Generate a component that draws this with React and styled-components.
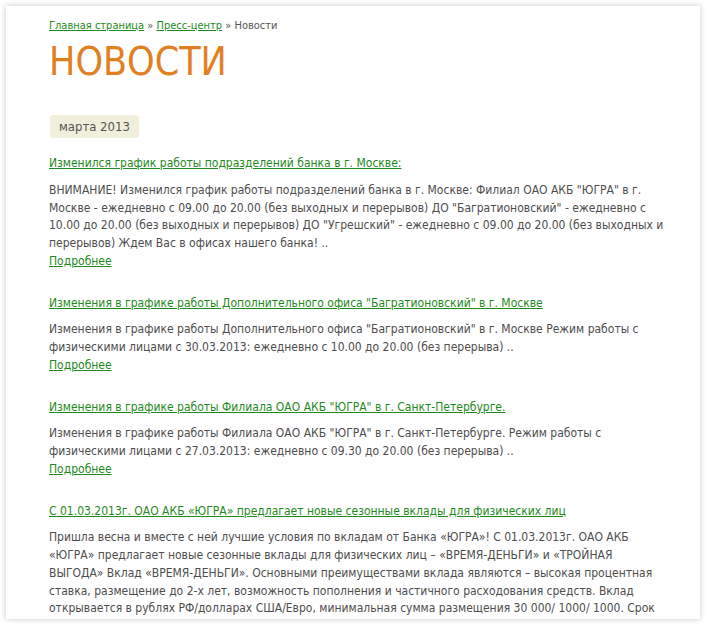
import React from 'react'
import styled, { createGlobalStyle } from 'styled-components'

const news = [
  {
    title: 'Изменился график работы подразделений банка в г. Москве:',
    text: 'ВНИМАНИЕ! Изменился график работы подразделений банка в г. Москве: Филиал ОАО АКБ "ЮГРА" в г. Москве - ежедневно с 09.00 до 20.00 (без выходных и перерывов) ДО "Багратионовский" - ежедневно с 10.00 до 20.00 (без выходных и перерывов) ДО "Угрешский" - ежедневно с 09.00 до 20.00 (без выходных и перерывов) Ждем Вас в офисах нашего банка! ..',
  },
  {
    title: 'Изменения в графике работы Дополнительного офиса "Багратионовский" в г. Москве',
    text: 'Изменения в графике работы Дополнительного офиса "Багратионовский" в г. Москве Режим работы с физическими лицами с 30.03.2013: ежедневно с 10.00 до 20.00 (без перерыва) ..',
  },
  {
    title: 'Изменения в графике работы Филиала ОАО АКБ "ЮГРА" в г. Санкт-Петербурге.',
    text: 'Изменения в графике работы Филиала ОАО АКБ "ЮГРА" в г. Санкт-Петербурге. Режим работы с физическими лицами с 27.03.2013: ежедневно с 09.30 до 20.00 (без перерыва) ..',
  },
  {
    title: 'С 01.03.2013г. ОАО АКБ «ЮГРА» предлагает новые сезонные вклады для физических лиц',
    text: 'Пришла весна и вместе с ней лучшие условия по вкладам от Банка «ЮГРА»! С 01.03.2013г. ОАО АКБ «ЮГРА» предлагает новые сезонные вклады для физических лиц – «ВРЕМЯ-ДЕНЬГИ» и «ТРОЙНАЯ ВЫГОДА» Вклад «ВРЕМЯ-ДЕНЬГИ». Основными преимуществами вклада являются – высокая процентная ставка, размещение до 2-х лет, возможность пополнения и частичного расходования средств. Вклад открывается в рублях РФ/долларах США/Евро, минимальная сумма размещения 30 000/ 1000/ 1000. Срок вклада – 91 день, 181 день, 367 дней, 546 дней и 731 день.',
  },
]

const GlobalStyle = createGlobalStyle`
  html, body {
    margin: 0;
    padding: 0;
    background: #ffffff;
  }
  body {
    font-family: 'DejaVu Sans Condensed', 'DejaVu Sans', sans-serif;
  }
`

const Page = styled.div`
  padding: 6px;
  height: 613px;
`

const Panel = styled.div`
  width: 694px;
  height: 613px;
  box-sizing: border-box;
  background: #ffffff;
  box-shadow: 0 0 6px rgba(0, 0, 0, 0.22);
  padding: 13px 31px 0 43px;
  overflow: hidden;
`

const Crumbs = styled.div`
  font-size: 11px;
  line-height: 14px;
  color: #555555;

  a {
    color: #1f8a22;
    text-decoration: underline;
  }
`

const Title = styled.h1`
  margin: 7px 0 0;
  font-family: 'DejaVu Sans Condensed', 'DejaVu Sans', sans-serif;
  font-weight: normal;
  font-size: 39px;
  line-height: 44px;
  color: #e2801f;
`

const DateBadge = styled.div`
  display: inline-block;
  margin: 31px 0 0 1px;
  padding: 0 9px;
  height: 23px;
  line-height: 23px;
  font-size: 13px;
  color: #555555;
  background: #f0efdc;
  border-radius: 3px;
`

const List = styled.div`
  margin-top: 17px;
  display: flex;
  flex-direction: column;
  gap: 24px;
`

const Item = styled.div`
  font-size: 12px;
  line-height: 17.75px;
`

const ItemLink = styled.a`
  color: #1f8a22;
  text-decoration: underline;
`

const ItemText = styled.p`
  margin: 9px 0 0;
  color: #4d4d4d;
`

const News = ({ title, text }) => (
  <Item>
    <ItemLink href="#">{title}</ItemLink>
    <ItemText>{text}</ItemText>
    <ItemLink href="#">Подробнее</ItemLink>
  </Item>
)

export default function App() {
  return (
    <>
      <GlobalStyle />
      <Page>
        <Panel>
          <Crumbs>
            <a href="#">Главная страница</a> » <a href="#">Пресс-центр</a> » Новости
          </Crumbs>
          <Title>НОВОСТИ</Title>
          <DateBadge>марта 2013</DateBadge>
          <List>
            {news.map((n) => (
              <News key={n.title} {...n} />
            ))}
          </List>
        </Panel>
      </Page>
    </>
  )
}
